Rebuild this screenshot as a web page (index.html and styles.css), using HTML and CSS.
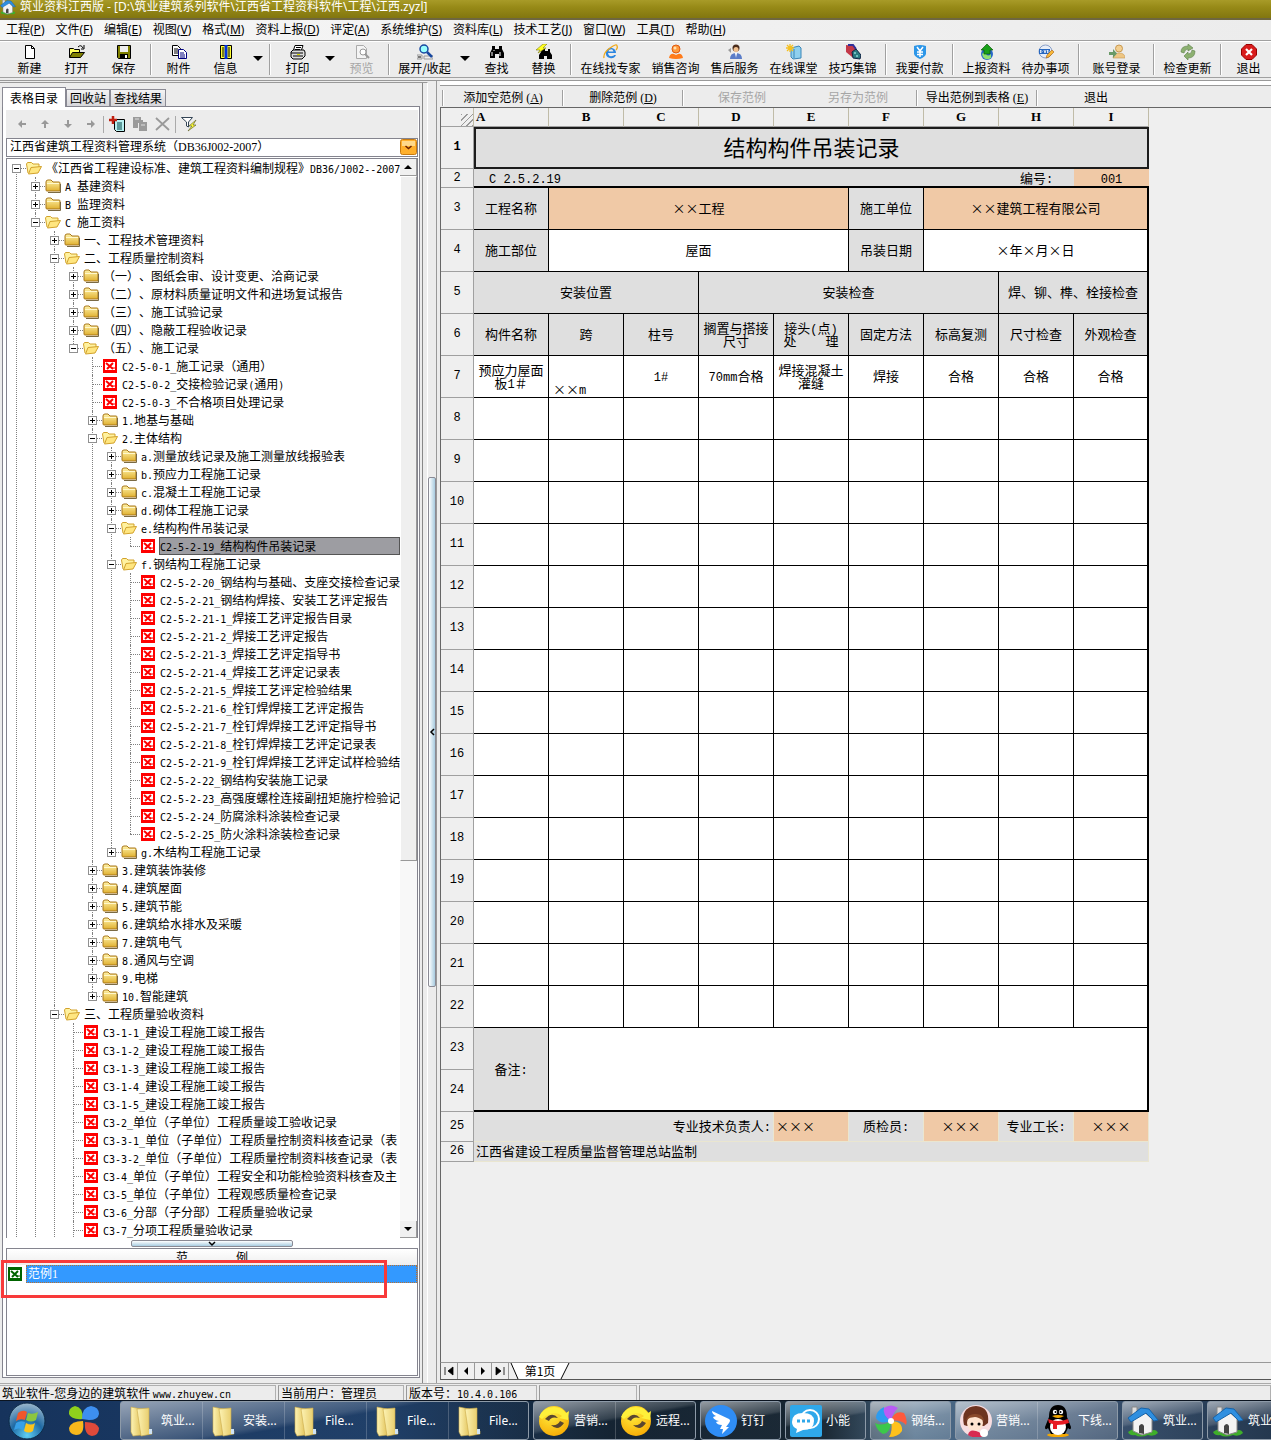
FILE: index.html
```html
<!DOCTYPE html>
<html lang="zh-CN">
<head>
<meta charset="utf-8">
<title>筑业资料江西版</title>
<link rel="stylesheet" href="styles.css">
</head>
<body>
<svg class="defs" aria-hidden="true">
  <defs>
    <linearGradient id="gold" x1="0" y1="0" x2="0" y2="1"><stop offset="0" stop-color="#fff3a8"/><stop offset="1" stop-color="#e0b030"/></linearGradient>
    <linearGradient id="manila" x1="0" y1="0" x2="1" y2="0"><stop offset="0" stop-color="#fdf3b4"/><stop offset="1" stop-color="#e3c55e"/></linearGradient>
    <radialGradient id="orb" cx=".5" cy=".9" r=".9"><stop offset="0" stop-color="#5fd0f5"/><stop offset=".5" stop-color="#1f6aa5"/><stop offset="1" stop-color="#9db8cc"/></radialGradient>
    <radialGradient id="sun" cx=".4" cy=".3" r=".8"><stop offset="0" stop-color="#ffec3d"/><stop offset="1" stop-color="#f7a600"/></radialGradient>
  </defs>
  <symbol id="i-closed" viewBox="0 0 16 14"><path d="M1 3q0-2 2-2h3l2 2h6q1 0 1 1v8H2q-1 0-1-1z" fill="url(#gold)" stroke="#a8761a"/><path d="M2 4.500h12" stroke="#fff8cc"/><path d="M3 13.500h12.500V5" fill="none" stroke="#7a6a45"/></symbol>
  <symbol id="i-open" viewBox="0 0 16 14"><path d="M2 12L.5 3l1-1.500h4L7 3h6v3" fill="#fff2a0" stroke="#d2a22c"/><path d="M2.500 13L5 6.500l10.500-1L12 12z" fill="#ffe680" stroke="#d2a22c"/></symbol>
  <symbol id="i-doc" viewBox="0 0 14 14"><path d="M0 0h14v14H0z" fill="currentColor"/><path d="M2 3h10v8H2z" fill="#fff"/><path d="M3 4l7 6M10 4l-6 6" stroke="currentColor" stroke-width="2"/><path d="M9 9h3" stroke="currentColor"/></symbol>
  <symbol id="i-house" viewBox="0 0 32 32"><path d="M1 27q5-4 9-2l13 1q6-3 8 2-4 4-10 2-8 3-13 0-5 1-7-3z" fill="#3fae2a"/><path d="M6 13l9-8 10 9v13l-10 3-9-4z" fill="#f3f3f3" stroke="#888"/><path d="M12 28v-7q3-4 5 0v8z" fill="#444"/><path d="M5 2h5v8H5z" fill="#ddd" stroke="#888"/><path d="M1 13L14 3l8 1 9 11-4 1-8-8L4 17z" fill="#2f8fe0" stroke="#1763a8"/></symbol>
  <symbol id="i-folder" viewBox="0 0 32 32"><path d="M6 2l10 2v26L8 31 6 27z" fill="url(#manila)" stroke="#c9a94a" stroke-width=".6"/><path d="M12 4l12-1v22l3 1v3l-11 2z" fill="url(#manila)" stroke="#c9a94a" stroke-width=".6"/><path d="M24 24h3v5h-3z" fill="#cfe3f5"/></symbol>
  <symbol id="i-swirl" viewBox="0 0 32 32"><circle cx="16" cy="16" r="15" fill="url(#sun)"/><path d="M7 14q7-8 13-1-7-2-9 3zM26 18q-6 9-13 2 7 1 9-4z" fill="#5a4630"/><path d="M1 12Q5 2 16 2q8 0 12 6l3-2-1 9-9-2 3-2Q15 4 4 14z" fill="#fff03a"/></symbol>
  <symbol id="i-new" viewBox="0 0 16 16"><path d="M3.500 1.500h6l3 3v10h-9z" fill="#fff" stroke="#000"/><path d="M9.500 1.500v3h3" fill="none" stroke="#000"/></symbol>
  <symbol id="i-fopen" viewBox="0 0 16 16"><path d="M.5 13.500v-9h4l1 1h5v3" fill="#ffff60" stroke="#000"/><path d="M.5 13.500l3-5h12l-4 5z" fill="#808000" stroke="#000"/><path d="M9 3q3-3 5 1m1-3v4h-3" fill="none" stroke="#000"/></symbol>
  <symbol id="i-save" viewBox="0 0 16 16"><path d="M1.500 1.500h13v13h-12l-1-1z" fill="#808000" stroke="#000"/><path d="M4 2h8v6H4z" fill="#eee"/><path d="M4 10h8v4H4z"/><path d="M9 11h2v3H9z" fill="#fff"/></symbol>
  <symbol id="i-copy" viewBox="0 0 16 16"><path d="M1.500 1.500h5l3 3v7h-8z" fill="#fff" stroke="#000"/><path d="M3 5h4M3 7h4M3 9h4" stroke="#000"/><path d="M7.500 5.500h5l3 3v6h-8z" fill="#fff" stroke="#000080"/><path d="M9 9h4M9 11h5M9 13h5" stroke="#000080"/></symbol>
  <symbol id="i-info" viewBox="0 0 16 16"><path d="M2.500 1.500h11v13h-11z" fill="#ff3" stroke="#000"/><path d="M4 4h2M4 6h2M4 8h2M4 10h2M4 12h2M10 4h2M10 6h2M10 8h2M10 10h2M10 12h2" stroke="#000"/><path d="M6.500 1h3v14h-3z" fill="#0030e0"/></symbol>
  <symbol id="i-print" viewBox="0 0 16 16"><path d="M5 1.500h8l-2 6H3z" fill="#fff" stroke="#000"/><path d="M6 3.500h5M5 5.500h5" stroke="#000"/><path d="M1 8l2-2h11l1 2v4l-3 3H3l-2-2z" fill="#ddd" stroke="#000"/><path d="M1 9h12M3 12h10" stroke="#000"/><path d="M7 10h3v1H7z" fill="#dd0"/></symbol>
  <symbol id="i-preview" viewBox="0 0 16 16"><path d="M2.500 1.500h7l3 3v10h-10z" fill="#f4f4f4" stroke="#aaa"/><circle cx="9" cy="8" r="3" fill="#fff" stroke="#999"/><path d="M11 10l4 4" stroke="#999" stroke-width="2"/></symbol>
  <symbol id="i-expand" viewBox="0 0 16 16"><path d="M0 11h5v4H0zM7 12h9v3H7z" fill="#eee" stroke="#999"/><path d="M1 13h3" stroke="#000"/><circle cx="7" cy="5" r="4" fill="#9ff" stroke="#1848a0" stroke-width="1.500"/><path d="M10 8l5 5" stroke="#1848a0" stroke-width="2.500"/></symbol>
  <symbol id="i-find" viewBox="0 0 16 16"><path d="M3 2h3v3h4V2h3v3l2 4v5h-5v-4H6v4H1V9l2-4z"/><path d="M3 8v4M11 8v4M5 6v1" stroke="#fff"/></symbol>
  <symbol id="i-replace" viewBox="0 0 16 16"><path d="M6 5h3v2h3V5h2v3l2 3v4h-5v-3H8v3H3v-4l2-3z"/><path d="M7 0L0 6h4L2 9l8-5H7l4-4z" fill="#ff2" stroke="#660" stroke-width=".5"/></symbol>
  <symbol id="i-ie" viewBox="0 0 16 16"><path d="M13 9H5q1 4 4 3 2 0 2-1h2q-2 4-6 3Q2 13 3 8q2-5 6-4 4 1 4 5zM5.500 7.500h5q-1-3-3-2-2 0-2 2z" fill="#2c86e0"/><path d="M1 14Q0 9 7 4t7-2q1 2-1 4" fill="none" stroke="#f0a818" stroke-width="1.300"/></symbol>
  <symbol id="i-user" viewBox="0 0 16 16"><circle cx="8" cy="5" r="4" fill="#ff9a3c" stroke="#e05a10"/><path d="M1 14q1-5 5-4l2 1 2-1q4-1 5 4-7 2-14 0z" fill="#ff7b1a"/><circle cx="7" cy="4" r="1.500" fill="#ffe0b0"/></symbol>
  <symbol id="i-agent" viewBox="0 0 16 16"><circle cx="9" cy="4" r="3.500" fill="#4a2c1c"/><circle cx="9" cy="5.500" r="2.500" fill="#f0c090"/><path d="M3 15q0-6 6-6t6 6z" fill="#5a7cc8"/><path d="M8 9l1 5 1-5z" fill="#fff"/><path d="M1 6l3-2v5z" fill="#999"/></symbol>
  <symbol id="i-class" viewBox="0 0 16 16"><path d="M5 4l8-2 2 2v10l-8 1-2-2z" fill="#8fd0ee" stroke="#3a86b8"/><path d="M8 5v9" stroke="#3a86b8"/><path d="M4 0v8M0 4h8M1 1l6 6M7 1L1 7" stroke="#f5c020" stroke-width="1.300"/></symbol>
  <symbol id="i-tips" viewBox="0 0 16 16"><path d="M1 1l8 1 4 8-6 3-6-5z" fill="#c33848"/><path d="M3 1h5l3 4" fill="none" stroke="#30309a" stroke-width="2"/><path d="M7 8l4-3 5 6-1 4-7-1z" fill="#2a7a80" stroke="#124"/><path d="M9 9h2M11 12h2" stroke="#bff"/></symbol>
  <symbol id="i-pay" viewBox="0 0 16 16"><path d="M2 2q6-2 12 0v8q-1 3-6 5-5-2-6-5z" fill="#2c96e8"/><path d="M5 3l3 4 3-4M5 8h6M5 10.500h6M8 7v6" fill="none" stroke="#fff" stroke-width="1.500"/></symbol>
  <symbol id="i-up" viewBox="0 0 16 16"><circle cx="8" cy="10" r="6" fill="#2868c8"/><path d="M3 10q2-3 4 0t5 0v4q-5 3-8-1z" fill="#8fe070"/><path d="M8 0l6 6h-3v4H5V6H2z" fill="#18a018" stroke="#0a5c0a" stroke-width=".7"/></symbol>
  <symbol id="i-dvd" viewBox="0 0 16 16"><circle cx="7.500" cy="7.500" r="6.500" fill="#e8eef8" stroke="#8aa0c8"/><path d="M1 5h11v5H1z" fill="#2868c0"/><path d="M2.500 6v3l1.500-1.500zM6 6l1 3 1-3M9.500 6v3l1.500-1.500z" fill="none" stroke="#fff" stroke-width=".8"/><path d="M8 14l1-3 5-5 2 2-5 5z" fill="#f8b838" stroke="#a86010" stroke-width=".6"/></symbol>
  <symbol id="i-login" viewBox="0 0 16 16"><circle cx="10" cy="4.500" r="3.500" fill="#f3cf90" stroke="#c89850"/><path d="M4 14q0-5 6-5t6 5z" fill="#eec684" stroke="#c89850" stroke-width=".6"/><path d="M0 8h4V5l4 4.500L4 14v-3H0z" fill="#6a9a68"/></symbol>
  <symbol id="i-update" viewBox="0 0 16 16"><path d="M1 8q0-6 7-6V0l5 4-5 3V5Q5 5 4 9z" fill="#8cb070" stroke="#5c8048" stroke-width=".6"/><path d="M15 7q0 7-7 7v2l-4-4 4-4v2q4 0 4-4z" fill="#8cb070" stroke="#5c8048" stroke-width=".6"/></symbol>
  <symbol id="i-exit" viewBox="0 0 16 16"><path d="M5 .5h6L15.500 5v6L11 15.500H5L.5 11V5z" fill="#d81c1c" stroke="#900"/><path d="M5 5l6 6M11 5l-6 6" stroke="#fff" stroke-width="2.200"/></symbol>
  <symbol id="i-arrow" viewBox="0 0 10 10"><path d="M1 5l4-4v3h4v2H5v3z" fill="#999"/></symbol>
  <symbol id="i-add" viewBox="0 0 16 16"><path d="M5.500 3.500h10v12h-8l-2-2z" fill="#b8f0f0" stroke="#000"/><path d="M8 7h5M8 9h5M8 11h5M8 13h5" stroke="#044"/><path d="M4 0v8M0 4h8" stroke="#c02010" stroke-width="2.500"/></symbol>
  <symbol id="i-paste" viewBox="0 0 16 16"><path d="M1 1h8v3h2v3H6v5H1zM7 6h8v9H7z" fill="#9a9a9a"/><path d="M3 3h4M9 9h4" stroke="#ddd"/></symbol>
  <symbol id="i-del" viewBox="0 0 16 16"><path d="M1 2l13 12M14 2L1 14" stroke="#999" stroke-width="1.800"/></symbol>
  <symbol id="i-filter" viewBox="0 0 16 16"><path d="M.5 1.500h11L7.500 6v5l-2-1V6z" fill="#fff" stroke="#345"/><path d="M15 4L8 10h3l-4 5 8-6h-3z" fill="#ff3" stroke="#663" stroke-width=".7"/></symbol>
</svg>

<header class="titlebar"><svg class="i16"><use href="#i-house"/></svg><h1>筑业资料江西版 - [D:\筑业建筑系列软件\江西省工程资料软件\工程\江西.zyzl]</h1></header>

<nav class="menubar">
  <button>工程(<u>P</u>)</button><button>文件(<u>F</u>)</button><button>编辑(<u>E</u>)</button><button>视图(<u>V</u>)</button><button>格式(<u>M</u>)</button><button>资料上报(<u>D</u>)</button><button>评定(<u>A</u>)</button><button>系统维护(<u>S</u>)</button><button>资料库(<u>L</u>)</button><button>技术工艺(<u>J</u>)</button><button>窗口(<u>W</u>)</button><button>工具(<u>T</u>)</button><button>帮助(<u>H</u>)</button>
</nav>

<div class="toolbar" role="toolbar">
  <button><svg class="i16"><use href="#i-new"/></svg>新建</button>
  <button><svg class="i16"><use href="#i-fopen"/></svg>打开</button>
  <button><svg class="i16"><use href="#i-save"/></svg>保存</button>
  <hr>
  <button><svg class="i16"><use href="#i-copy"/></svg>附件</button>
  <button><svg class="i16"><use href="#i-info"/></svg>信息</button>
  <button class="drop" aria-label="信息选项"></button>
  <hr>
  <button><svg class="i16"><use href="#i-print"/></svg>打印</button>
  <button class="drop" aria-label="打印选项"></button>
  <button disabled><svg class="i16"><use href="#i-preview"/></svg>预览</button>
  <hr>
  <button class="mid"><svg class="i16"><use href="#i-expand"/></svg>展开/收起</button>
  <button class="drop" aria-label="展开选项"></button>
  <button><svg class="i16"><use href="#i-find"/></svg>查找</button>
  <button><svg class="i16"><use href="#i-replace"/></svg>替换</button>
  <hr>
  <button class="wide"><svg class="i16"><use href="#i-ie"/></svg>在线找专家</button>
  <button class="four"><svg class="i16"><use href="#i-user"/></svg>销售咨询</button>
  <button class="four"><svg class="i16"><use href="#i-agent"/></svg>售后服务</button>
  <button class="four"><svg class="i16"><use href="#i-class"/></svg>在线课堂</button>
  <button class="four"><svg class="i16"><use href="#i-tips"/></svg>技巧集锦</button>
  <hr>
  <button class="four"><svg class="i16"><use href="#i-pay"/></svg>我要付款</button>
  <hr>
  <button class="four"><svg class="i16"><use href="#i-up"/></svg>上报资料</button>
  <button class="four"><svg class="i16"><use href="#i-dvd"/></svg>待办事项</button>
  <hr>
  <button class="login"><svg class="i16"><use href="#i-login"/></svg>账号登录</button>
  <hr>
  <button class="four"><svg class="i16"><use href="#i-update"/></svg>检查更新</button>
  <hr>
  <button><svg class="i16"><use href="#i-exit"/></svg>退出</button>
</div>

<main class="work">
  <section class="side">
    <div class="tabs" role="tablist">
      <button class="on" role="tab">表格目录</button><button role="tab">回收站</button><button role="tab">查找结果</button>
    </div>
    <div class="page">
      <div class="minibar">
        <button aria-label="左移"><svg class="i10"><use href="#i-arrow"/></svg></button>
        <button aria-label="上移"><svg class="i10 up"><use href="#i-arrow"/></svg></button>
        <button aria-label="下移"><svg class="i10 down"><use href="#i-arrow"/></svg></button>
        <button aria-label="右移"><svg class="i10 right"><use href="#i-arrow"/></svg></button>
        <hr>
        <button aria-label="添加"><svg class="i16"><use href="#i-add"/></svg></button>
        <button aria-label="复制"><svg class="i16"><use href="#i-paste"/></svg></button>
        <button aria-label="删除"><svg class="i16"><use href="#i-del"/></svg></button>
        <hr>
        <button aria-label="筛选"><svg class="i16"><use href="#i-filter"/></svg></button>
      </div>
      <div class="combo">
        <select aria-label="资料管理系统"><option>江西省建筑工程资料管理系统（DB36J002-2007）</option></select>
        <svg class="caret" viewBox="0 0 17 16"><rect x=".5" y=".5" width="16" height="15" rx="2" fill="#ffb02c" stroke="#c87a10"/><path d="M2 2h13v5H2z" fill="#ffd98a"/><path d="M5.500 7l3 2.500 3-2.500" fill="none" stroke="#6a2000" stroke-width="1.500"/></svg>
      </div>
      <div class="treebox">
        <div class="tree" id="tree"></div>
        <div class="vscroll"><button class="sb up" aria-label="向上滚动"></button><div class="thumb"></div><div class="track"></div><button class="sb" aria-label="向下滚动"></button></div>
      </div>
      <div class="hgrip"><svg viewBox="0 0 10 6"><path d="M2 1l3 3 3-3" fill="none" stroke="#000" stroke-width="1.500"/></svg></div>
      <div class="samples">
        <div class="samples-head"><span>范</span><span>例</span></div>
        <div class="sample"><svg class="doc ok"><use href="#i-doc"/></svg><button>范例1</button></div>
        <div class="mark"></div>
      </div>
    </div>
  </section>

  <div class="vgrip"><div class="handle"><svg viewBox="0 0 6 10"><path d="M5 2L2 5l3 3" fill="none" stroke="#000" stroke-width="1.500"/></svg></div></div>

  <section class="editor">
    <div class="cmdbar">
      <hr><button class="c1">添加空范例<span class="s">(<u>A</u>)</span></button>
      <hr><button class="c1">删除范例<span class="s">(<u>D</u>)</span></button>
      <hr><button class="c2" disabled>保存范例</button><button class="c2" disabled>另存为范例</button>
      <hr><button class="c1">导出范例到表格<span class="s">(<u>E</u>)</span></button>
      <hr><button class="c2">退出</button>
    </div>
    <div class="sheet">
      <table>
        <colgroup><col class="rh"><col span="9"></colgroup>
        <thead><tr><th class="corner"></th><th class="first">A</th><th>B</th><th>C</th><th>D</th><th>E</th><th>F</th><th>G</th><th>H</th><th>I</th></tr></thead>
        <tbody>
          <tr><th class="cur">1</th><td colspan="9" class="g title">结构构件吊装记录</td></tr>
          <tr class="r2"><th>2</th><td colspan="7" class="g code"><span class="m">C 2.5.2.19</span></td><td class="g">编号<span class="m">:</span></td><td class="o"><span class="m">001</span></td></tr>
          <tr><th>3</th><td class="g">工程名称</td><td colspan="4" class="o">××工程</td><td class="g">施工单位</td><td colspan="3" class="o">××建筑工程有限公司</td></tr>
          <tr><th>4</th><td class="g">施工部位</td><td colspan="4">屋面</td><td class="g">吊装日期</td><td colspan="3">×年×月×日</td></tr>
          <tr><th>5</th><td colspan="3" class="g">安装位置</td><td colspan="4" class="g">安装检查</td><td colspan="2" class="g">焊、铆、榫、栓接检查</td></tr>
          <tr><th>6</th><td class="g">构件名称</td><td class="g">跨</td><td class="g">柱号</td><td class="g">搁置与搭接尺寸</td><td class="g">接头<span class="m">(</span>点<span class="m">)</span><br>处　　&nbsp;理</td><td class="g">固定方法</td><td class="g">标高复测</td><td class="g">尺寸检查</td><td class="g">外观检查</td></tr>
          <tr id="last-filled"><th>7</th><td>预应力屋面板<span class="m">1</span>＃</td><td class="low">××<span class="m">m</span></td><td><span class="m">1#</span></td><td><span class="m">70mm</span>合格</td><td>焊接混凝土灌缝</td><td>焊接</td><td>合格</td><td>合格</td><td>合格</td></tr>
          <tr><th>23</th><td rowspan="2" class="g end">备注<span class="m">:</span></td><td colspan="8" rowspan="2" class="end"></td></tr>
          <tr><th>24</th></tr>
          <tr class="r25"><th>25</th><td colspan="4" class="g rt">专业技术负责人<span class="m">:</span></td><td class="o lf">×××</td><td class="g">质检员<span class="m">:</span></td><td class="o">×××</td><td class="g">专业工长<span class="m">:</span></td><td class="o">×××</td></tr>
          <tr class="r26"><th>26</th><td colspan="9" class="g lf">江西省建设工程质量监督管理总站监制</td></tr>
        </tbody>
      </table>
    </div>
    <div class="sheettabs">
      <button aria-label="首页"><svg viewBox="0 0 16 16"><path d="M4 4v8M12 4v8L7 8z" stroke="#000" stroke-width=".8"/></svg></button>
      <button aria-label="上一页"><svg viewBox="0 0 16 16"><path d="M10 4v8L6 8z"/></svg></button>
      <button aria-label="下一页"><svg viewBox="0 0 16 16"><path d="M6 4v8l4-4z"/></svg></button>
      <button aria-label="末页"><svg viewBox="0 0 16 16"><path d="M12 4v8M4 4v8l5-4z" stroke="#000" stroke-width=".8"/></svg></button>
      <button class="leaf"><svg viewBox="0 0 60 17"><path d="M1 0l7 16h43l8-16z" fill="#fff"/><path d="M1 0l7 16M51 16l8-16" stroke="#000"/></svg><span>第1页</span></button>
    </div>
  </section>
</main>

<footer class="status">
  <span class="s1">筑业软件-您身边的建筑软件 <span class="n">www.zhuyew.cn</span></span><span class="s2">当前用户：管理员</span><span class="s3">版本号：<span class="n">10.4.0.106</span></span><span class="s4"></span><span class="s5"></span>
</footer>

<nav class="taskbar">
  <button class="start" aria-label="开始"><svg viewBox="0 0 38 38"><circle cx="19" cy="19" r="18" fill="url(#orb)" stroke="#0c2b48"/><path d="M10 11q5-4 9-1l-2 8q-5-2-9 1z" fill="#f0562a"/><path d="M20 11q5 2 10-1l-2 8q-5 3-10 0z" fill="#8cc63e"/><path d="M8 21q4-3 9-1l-2 8q-4-3-9 0z" fill="#38a0e8"/><path d="M18 21q5 3 9 0l-2 8q-4 3-9 0z" fill="#fcc41c"/></svg></button>
  <button class="clover" aria-label="浏览器"><svg viewBox="0 0 32 32"><path d="M15 14Q15 2 7 1 0 3 1 9q2 6 14 5z" fill="#8fd01c"/><path d="M14 14Q14 2 23 1q8 1 8 8-1 6-10 6z" fill="#3d8ff0"/><path d="M17 17q12 0 14 6 0 7-7 8-8-1-7-14z" fill="#e04a3a"/><path d="M15 16q2 14-7 14-7-1-7-7 2-7 14-7z" fill="#f8b81c"/></svg></button>
  <div class="grp first">
    <button><svg class="i32"><use href="#i-folder"/></svg>筑业...</button><button><svg class="i32"><use href="#i-folder"/></svg>安装...</button><button><svg class="i32"><use href="#i-folder"/></svg>File...</button><button><svg class="i32"><use href="#i-folder"/></svg>File...</button><button><svg class="i32"><use href="#i-folder"/></svg>File...</button>
  </div>
  <div class="grp"><button><svg class="i32"><use href="#i-swirl"/></svg>营销...</button><button><svg class="i32"><use href="#i-swirl"/></svg>远程...</button></div>
  <div class="grp"><button><svg class="i32" viewBox="0 0 32 32"><circle cx="16" cy="16" r="16" fill="#2f8df5"/><path d="M7 6l17 8q2 1 0 4l-3 4h3l-7 7 1-5h-3l2-4q-5 0-6-3l3-1q-5-1-6-4l3-1Q7 9 7 6z" fill="#fff"/></svg>钉钉</button></div>
  <div class="grp"><button><svg class="i32" viewBox="0 0 32 32"><rect width="32" height="32" rx="2" fill="#2fa8ea"/><circle cx="20" cy="14" r="9" fill="none" stroke="#fff" stroke-width="2"/><path d="M2 17q0-9 11-9t11 8q0 9-11 9l-7 3 1-4q-5-2-5-7z" fill="#fff"/><path d="M7 16h3M12 16h3M17 16h3" stroke="#2fa8ea" stroke-width="3"/></svg>小能</button></div>
  <div class="grp lit"><button><svg class="i32" viewBox="0 0 32 32"><path d="M16 16Q6 13 9 3q7-5 14 0-5 4-7 13z" fill="#b95cf5"/><path d="M16 16Q19 5 29 8q4 7 2 12-5-6-15-4z" fill="#ff5a3c"/><path d="M16 16q12 0 11 10-4 6-13 6 4-6 2-16z" fill="#ffc21c"/><path d="M16 16q0 12-8 13-6-3-8-11 7 4 16-2z" fill="#3cc84a"/><path d="M16 16Q5 20 1 13q0-7 8-11-2 8 7 14z" fill="#2c9cf0"/><circle cx="16" cy="16" r="3" fill="#fff"/></svg>钢结...</button></div>
  <div class="grp lit"><button><svg class="i32" viewBox="0 0 32 32"><circle cx="16" cy="16" r="16" fill="#f8dde0"/><path d="M4 20Q0 2 16 1q14 1 12 17l-4 3H7z" fill="#6e3420"/><circle cx="15" cy="18" r="8" fill="#ffe4d0"/><path d="M6 15q3-7 10-6 7 0 8 7-6-4-9-4-5 0-9 3z" fill="#8a4a2c"/><circle cx="12" cy="19" r="1.500"/><circle cx="19" cy="19" r="1.500"/><path d="M8 30q1-6 8-4t6 6q-8 2-14-2z" fill="#d82a50"/><circle cx="24" cy="28" r="4" fill="#fff"/></svg>营销...</button><button><svg class="i32" viewBox="0 0 32 32"><ellipse cx="16" cy="30" rx="11" ry="2" fill="#f5a800"/><path d="M7 12q0-12 9-12t9 12l4 10q0 4-3 1l-3 6H9l-3-6q-3 3-3-1z"/><ellipse cx="16" cy="22" rx="8" ry="8" fill="#fff"/><circle cx="13" cy="7" r="2.200" fill="#fff"/><circle cx="19" cy="7" r="2.200" fill="#fff"/><circle cx="13.500" cy="7" r="1"/><circle cx="18.500" cy="7" r="1"/><path d="M10 11q6-2 12 0-6 4-12 0z" fill="#f5a800"/><path d="M6 14q10 4 20 0l1 4q-6 2-12 2v4h-4v-5l-4-1z" fill="#e81c24"/></svg>下线...</button></div>
  <div class="grp"><button><svg class="i32"><use href="#i-house"/></svg>筑业...</button></div>
  <div class="grp"><button><svg class="i32"><use href="#i-house"/></svg>筑业...</button></div>
</nav>
<script src="script.js"></script>
</body>
</html>
```
FILE: styles.css
```css
* { box-sizing: border-box; }
html, body { height: 100%; }
body {
  margin: 0; display: flex; flex-direction: column; overflow: hidden;
  background: #ececec; color: #000; text-spacing-trim: space-all;
  font: 12px/16px "Liberation Serif", "Noto Sans CJK SC", sans-serif;
}
button { margin: 0; padding: 0; border: 0; background: none; font: inherit; color: inherit; white-space: nowrap; }
button:disabled { color: #a6a6a6; }
hr { margin: 0; border: 0; }
.defs { position: absolute; width: 0; height: 0; }
.i16 { width: 16px; height: 16px; flex: none; }
.i10 { width: 10px; height: 10px; }
.i32 { width: 32px; height: 32px; flex: none; }
.n { font: 10px/1px "DejaVu Sans Mono", monospace; }
.m { font: 12px/1px "Liberation Mono", monospace; }

/* window chrome */
.titlebar { flex: none; height: 20px; display: flex; align-items: flex-start; gap: 4px;
  background: linear-gradient(#a89b28, #978a17 40%, #82760f); border-bottom: 2px solid #6e6640; }
.titlebar .i16 { margin-top: -1px; }
.titlebar h1 { margin: 0; font: 12px/13px "Noto Sans", "Noto Sans CJK SC", sans-serif; color: #fff; white-space: nowrap; }
.menubar { flex: none; height: 21px; display: flex; gap: 11px; padding: 0 6px; background: linear-gradient(90deg, #f6f6f6, #ececec);
  font: 12px/20px "Noto Sans", "Noto Sans CJK SC", sans-serif; border-bottom: 1px solid #a0a0a0; }
.toolbar { flex: none; height: 37px; display: flex; padding: 2px 0 0 6px; border-top: 1px solid #fff; border-bottom: 1px solid #a0a0a0; overflow: hidden; }
.toolbar button { flex: none; width: 47px; height: 34px; display: flex; flex-direction: column; align-items: center; font-family: "Noto Sans CJK SC", sans-serif; }
.toolbar .mid { width: 63px; }
.toolbar .four { width: 59px; }
.toolbar .wide { width: 71px; }
.toolbar .login { width: 67px; }
.toolbar .drop { width: 17px; }
.drop::before { content: ""; margin-top: 12px; border: 5px solid transparent; border-top-color: #000; border-bottom: 0; }
.toolbar hr { flex: none; width: 2px; height: 31px; margin: 0 3px; background: linear-gradient(90deg, #a0a0a0 50%, #fff 50%); }

.work { flex: 1; min-height: 0; display: flex; margin-top: 2px; border-top: 1px solid #999; border-bottom: 1px solid #aaa; }

/* left panel */
.side { flex: none; width: 428px; display: flex; flex-direction: column; padding: 5px 6px 5px 2px; margin-top: 1px;
  border-top: 1px solid #999; border-right: 1px solid #fff; background: #ececec; box-shadow: inset -4px 0 #ececec, inset -5px 0 #888; }
.tabs { display: flex; align-items: flex-end; height: 18px; margin-right: 5px; background: #ececec; }
.tabs button { height: 17px; padding: 0 3px; border: 1px solid #8a8a94; border-bottom: 0; background: linear-gradient(#f4f4f4, #d6d6da); line-height: 16px; font-family: "Noto Sans CJK SC", sans-serif; }
.tabs .on { height: 20px; margin-bottom: -1px; padding: 0 7px; background: #fff; position: relative; line-height: 17px; }
.page { flex: 1; min-height: 0; display: flex; flex-direction: column; margin-right: 1px; padding: 3px 1px 1px 3px; background: #fff; border: 1px solid #84848e; }
.minibar { flex: none; height: 28px; display: flex; align-items: center; padding-left: 4px; background: #ececec; }
.minibar button { width: 23px; height: 20px; display: flex; align-items: center; justify-content: center; }
.minibar hr { width: 1px; height: 17px; background: #aaa; margin: 0 1px; }
.up { transform: rotate(90deg); } .right { transform: rotate(180deg); } .down { transform: rotate(270deg); }
.combo { flex: none; height: 19px; position: relative; border: 1px solid #84848e; }
.combo select { display: block; width: 100%; height: 17px; padding: 0 20px 0 3px; border: 0; appearance: none; background: #fff; color: #000; font: inherit; line-height: 17px; }
.caret { position: absolute; right: 0; top: 0; width: 17px; height: 16px; }
.treebox { flex: 1; min-height: 0; display: flex; margin-top: 1px; border: 1px solid #84848e; border-bottom: 0; }
.tree { flex: 1; min-width: 0; overflow: hidden; }
.tree ul { list-style: none; margin: 0; padding: 0 0 0 19px; }
.tree > ul { padding-left: 4px; }
.tree li { position: relative; }
.tree li::before { content: ""; position: absolute; left: 5px; top: 0; bottom: 0; border-left: 1px dotted #808080; }
.tree li.last::before { bottom: auto; height: 9px; }
.tree .root::before { top: 9px; }
.row { display: flex; align-items: center; height: 18px; white-space: nowrap; position: relative; font-family: "Noto Sans CJK SC", sans-serif; }
.row::before { content: ""; order: 1; width: 10px; margin-left: 5px; border-top: 1px dotted #808080; flex: none; }
.tg { position: absolute; left: 1px; top: 5px; width: 9px; height: 9px; border: 1px solid #909090; background: #fff; }
.tg::before { content: ""; position: absolute; left: 1px; top: 3px; width: 5px; height: 1px; background: #000; }
.closed > .row .tg::after { content: ""; position: absolute; left: 3px; top: 1px; width: 1px; height: 5px; background: #000; }
.row svg { order: 2; width: 16px; height: 14px; flex: none; }
.row .doc { width: 14px; margin: 0 1px; }
.doc { width: 14px; height: 14px; color: #f00; flex: none; }
.doc.ok { color: #006400; }
.row .t { order: 3; flex: 1; margin-left: 3px; padding-left: 1px; height: 18px; line-height: 17px; }
.row .sel { background: #9d9da2; outline: 1px solid #555; outline-offset: -1px; }
.vscroll { width: 17px; display: flex; flex-direction: column; background: #ececec; }
.sb { flex: none; height: 17px; display: flex; align-items: center; justify-content: center; background: #f0f0f0; border-right: 1px solid #999; border-bottom: 1px solid #999; }
.sb.up { transform: none; }
.sb::before { content: ""; border: 4px solid transparent; border-top-color: #000; border-bottom: 0; }
.sb.up::before { border: 4px solid transparent; border-bottom-color: #000; border-top: 0; }
.thumb { flex: 684; background: #efefef; border: 1px solid #999; border-top-color: #fff; border-left-color: #fff; }
.track { flex: 360; background: #f8f8f8; }
.hgrip { flex: none; align-self: center; width: 162px; height: 7px; margin: 2px 0 1px; border: 1px solid #8a8a94; border-radius: 2px; background: linear-gradient(#fff, #a8cce0); display: flex; justify-content: center; }
.hgrip svg { width: 10px; height: 6px; }
.samples { flex: none; height: 128px; position: relative; border: 1px solid #84848e; background: #fff; }
.samples-head { height: 16px; display: flex; justify-content: center; gap: 48px; background: linear-gradient(#fff, #eee); font-family: "Noto Sans CJK SC", sans-serif; line-height: 15px; }
.sample { display: flex; align-items: center; height: 18px; padding-left: 1px; gap: 4px; }
.sample button { flex: 1; height: 18px; padding-left: 1px; text-align: left; color: #fff; background: #39f; border: 1px dotted #b87030; line-height: 16px; }
.mark { position: absolute; left: -6px; top: 11px; width: 386px; height: 38px; border: 3px solid #f83a3a; }

.vgrip { flex: none; width: 9px; display: flex; align-items: center; border-right: 1px solid #999; background: #ececec; }
.handle { width: 8px; height: 510px; display: flex; align-items: center; border: 1px solid #8a8a94; border-radius: 2px; background: linear-gradient(90deg, #fff, #a8cce0); }
.handle svg { width: 6px; height: 10px; }

/* right panel */
.editor { flex: 1; min-width: 0; display: flex; flex-direction: column; padding: 0 0 3px 3px; background: #ececec; }
.cmdbar { flex: none; height: 26px; border-top: 4px solid #fff; box-shadow: inset 0 1px #999; display: flex; align-items: center; padding-left: 2px; }
.cmdbar hr { flex: none; width: 2px; height: 16px; margin: 3px 0 0; background: linear-gradient(90deg, #a0a0a0 50%, #fff 50%); }
.cmdbar button { height: 18px; margin-top: 2px; font-family: "Noto Sans CJK SC", sans-serif; }
.c1 { width: 118px; }
.c2 { width: 116px; }
.s { font: 12px/16px "Liberation Serif", serif; margin-left: 3px; }
.sheet { flex: 1; min-height: 0; overflow: hidden; background: #efefef; border-left: 1px solid #666; border-top: 1px solid #666; }
table { width: 708px; table-layout: fixed; border-collapse: separate; border-spacing: 0; font: 13px/13px "Noto Sans CJK SC", sans-serif; }
col { width: 75px; } .rh { width: 33px; }
th { padding: 0; border-right: 1px solid #a0a0a0; border-bottom: 1px solid #a0a0a0; background: #efefef; font: 12px/13px "Liberation Mono", monospace; }
thead th { height: 19px; font: bold 13px/16px "Liberation Serif", serif; border-right-color: #c0bca8; }
thead .first { text-align: left; padding-left: 2px; }
.corner { background: repeating-linear-gradient(135deg, #999 0 1px, #efefef 1px 4px) right bottom / 12px 12px no-repeat #efefef; clip-path: none; }
.cur { font-weight: bold; }
tbody tr { height: 42px; }
td { padding: 0 4px 2px; text-align: center; vertical-align: middle; background: #fff; border-right: 1px solid #000; border-bottom: 1px solid #000; }
td:last-child { border-right-width: 2px; }
.g { background: #dfdfdf; }
.o { background: #f0c9a6; }
.title { padding-bottom: 4px; font-size: 22px; line-height: 30px; border: 2px solid #1c1c1c; }
tbody .r2 { height: 19px; }
tbody .r25 { height: 30px; }
tbody .r26 { height: 20px; }
.r2 td { padding-bottom: 0; border-bottom: 2px solid #000; border-right: 0; }
.r2 .code { text-align: left; padding-left: 15px; }
.low { vertical-align: bottom; text-align: left; }
.end { border-bottom-width: 2px; }
.r25 td, .r26 td { border-right: 1px solid #eae6d0; border-bottom: 1px solid #eae6d0; }
.rt { text-align: right; padding: 0 2px 2px; }
.lf { text-align: left; padding: 0 2px 2px; }
.sheettabs { flex: none; height: 18px; display: flex; background: #efefef; border: 1px solid #999; border-bottom: 1px solid #555; border-left-color: #666; border-right: 0; }
.sheettabs button { width: 17px; height: 16px; border-right: 1px solid #999; }
.sheettabs svg { display: block; width: 16px; height: 16px; }
.sheettabs .leaf { position: relative; width: 60px; margin-left: 1px; border: 0; font-family: "Noto Sans CJK SC", sans-serif; }
.sheettabs .leaf svg { position: absolute; left: 0; top: 0; width: 60px; height: 17px; }
.leaf span { position: relative; }

/* status and task bars */
.status { flex: none; height: 15px; margin-top: 1px; display: flex; gap: 2px; font-family: "Noto Sans CJK SC", sans-serif; line-height: 14px; white-space: nowrap; }
.status > span { height: 15px; padding-left: 2px; border: 1px solid #b0b0b0; border-bottom: 0; border-left-color: #999; }
.s1 { width: 277px; margin-left: -1px; } .s2 { width: 126px; } .s3 { width: 131px; } .s4 { width: 98px; } .s5 { flex: 1; }
.taskbar { flex: none; height: 40px; display: flex; padding-left: 8px; overflow: hidden; gap: 4px; color: #fff; border-top: 1px solid #0b1420;
  background: linear-gradient(90deg, #16335c, #1c3c66 30%, #10202f 48%, #182632 65%, #4c6b88 72%, #3a5270 85%, #20344c); font: 12px/16px "Noto Sans", "Noto Sans CJK SC", sans-serif; }
.start svg { display: block; width: 38px; height: 38px; }
.clover { margin-left: 18px; } .clover svg { display: block; width: 32px; height: 32px; }
.grp { flex: none; display: flex; height: 39px; border: 1px solid #8d9aa8; border-radius: 3px; background: linear-gradient(170deg, rgba(255,255,255,.55), rgba(255,255,255,.15) 45%, rgba(255,255,255,.02) 50%); }
.grp.first { margin-left: 16px; }
.grp.lit { background: linear-gradient(170deg, rgba(255,255,255,.6), rgba(255,255,255,.25) 50%, rgba(255,255,255,.15)); }
.grp button { width: 82px; padding-left: 4px; display: flex; align-items: center; gap: 4px; border-right: 1px solid rgba(255,255,255,.2); }
.grp button:last-child { width: 79px; border-right: 0; }
```
FILE: script.js
```js
// Leading digit = depth; "+" closed folder, "-" open folder, "*" form,
// "=" selected form, "~" marks a node whose siblings continue below the view.
const outline = `
0-~ 《江西省工程建设标准、建筑工程资料编制规程》DB36/J002--2007
1+ A 基建资料
1+ B 监理资料
1-~ C 施工资料
2+ 一、工程技术管理资料
2- 二、工程质量控制资料
3+ （一）、图纸会审、设计变更、洽商记录
3+ （二）、原材料质量证明文件和进场复试报告
3+ （三）、施工试验记录
3+ （四）、隐蔽工程验收记录
3- （五）、施工记录
4* C2-5-0-1_施工记录（通用）
4* C2-5-0-2_交接检验记录(通用)
4* C2-5-0-3_不合格项目处理记录
4+ 1.地基与基础
4- 2.主体结构
5+ a.测量放线记录及施工测量放线报验表
5+ b.预应力工程施工记录
5+ c.混凝土工程施工记录
5+ d.砌体工程施工记录
5- e.结构构件吊装记录
6= C2-5-2-19_结构构件吊装记录
5- f.钢结构工程施工记录
6* C2-5-2-20_钢结构与基础、支座交接检查记录
6* C2-5-2-21_钢结构焊接、安装工艺评定报告
6* C2-5-2-21-1_焊接工艺评定报告目录
6* C2-5-2-21-2_焊接工艺评定报告
6* C2-5-2-21-3_焊接工艺评定指导书
6* C2-5-2-21-4_焊接工艺评定记录表
6* C2-5-2-21-5_焊接工艺评定检验结果
6* C2-5-2-21-6_栓钉焊焊接工艺评定报告
6* C2-5-2-21-7_栓钉焊焊接工艺评定指导书
6* C2-5-2-21-8_栓钉焊焊接工艺评定记录表
6* C2-5-2-21-9_栓钉焊焊接工艺评定试样检验结果
6* C2-5-2-22_钢结构安装施工记录
6* C2-5-2-23_高强度螺栓连接副扭矩施拧检验记录
6* C2-5-2-24_防腐涂料涂装检查记录
6* C2-5-2-25_防火涂料涂装检查记录
5+ g.木结构工程施工记录
4+ 3.建筑装饰装修
4+ 4.建筑屋面
4+ 5.建筑节能
4+ 6.建筑给水排水及采暖
4+ 7.建筑电气
4+ 8.通风与空调
4+ 9.电梯
4+ 10.智能建筑
2-~ 三、工程质量验收资料
3* C3-1-1_建设工程施工竣工报告
3* C3-1-2_建设工程施工竣工报告
3* C3-1-3_建设工程施工竣工报告
3* C3-1-4_建设工程施工竣工报告
3* C3-1-5_建设工程施工竣工报告
3* C3-2_单位（子单位）工程质量竣工验收记录
3* C3-3-1_单位（子单位）工程质量控制资料核查记录（表
3* C3-3-2_单位（子单位）工程质量控制资料核查记录（表
3* C3-4_单位（子单位）工程安全和功能检验资料核查及主
3* C3-5_单位（子单位）工程观感质量检查记录
3* C3-6_分部（子分部）工程质量验收记录
3*~ C3-7_分项工程质量验收记录`.trim().split("\n");

const lists = [document.createElement("ul")];
document.getElementById("tree").append(lists[0]);

for (const line of outline) {
  const [, depth, kind, more, label] = line.match(/^(\d)([-+*=])(~?) (.*)$/);
  const level = Number(depth);
  const folder = kind === "+" || kind === "-";
  const icon = folder
    ? `<i class="tg"></i><svg><use href="#i-${kind === "+" ? "closed" : "open"}"/></svg>`
    : `<svg class="doc"><use href="#i-doc"/></svg>`;
  const text = label.replace(/[\x20-\x7e]+/g, '<span class="n">$&</span>');
  const li = document.createElement("li");
  li.className = (kind === "+" ? "closed" : "") + (level ? "" : " root");
  li.dataset.more = more;
  li.innerHTML = `<div class="row">${icon}<span class="t${kind === "=" ? " sel" : ""}">${text}</span></div>`;
  lists[level].append(li);
  if (kind === "-") {
    lists[level + 1] = document.createElement("ul");
    li.append(lists[level + 1]);
  }
}
document.querySelectorAll(".tree li:last-child").forEach((li) => {
  if (!li.dataset.more) li.classList.add("last");
});

// Blank entry rows between the filled row and the remarks.
let anchor = document.getElementById("last-filled");
for (let n = 8; n <= 22; n++) {
  const tr = document.createElement("tr");
  tr.innerHTML = `<th>${n}</th>` + "<td></td>".repeat(9);
  anchor.after(tr);
  anchor = tr;
}
```
